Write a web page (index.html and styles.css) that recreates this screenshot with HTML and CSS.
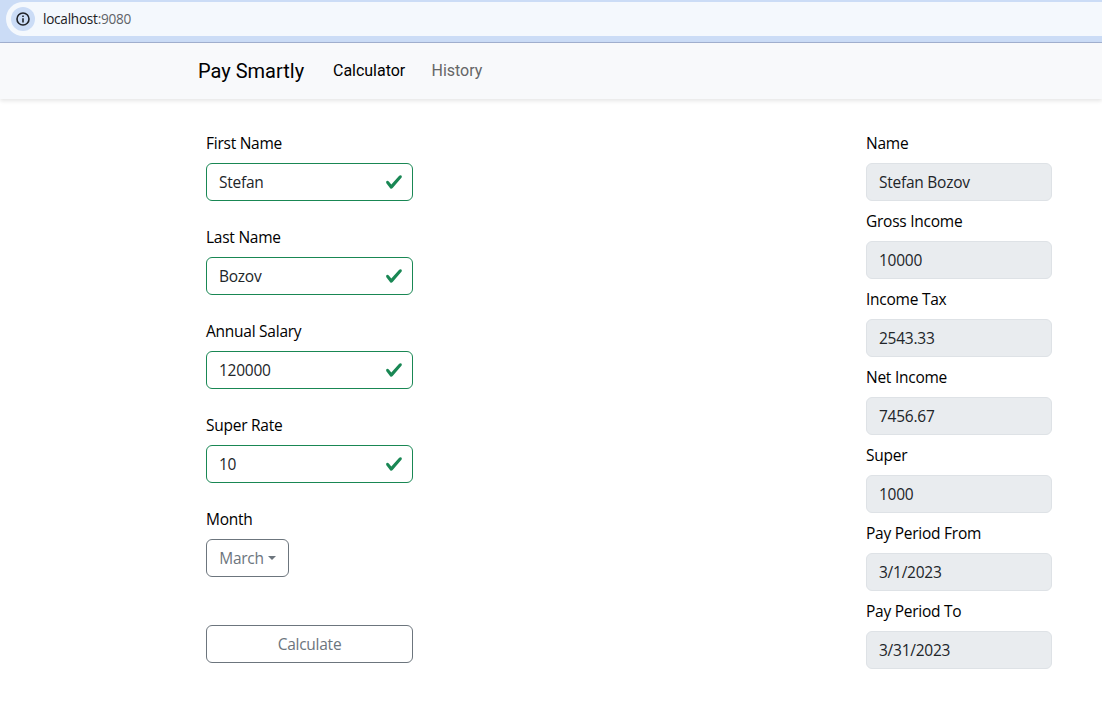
FILE: index.html
```html
<!DOCTYPE html>
<html lang="en">
<head>
<meta charset="utf-8">
<title>Pay Smartly</title>
<link rel="stylesheet" href="styles.css">
</head>
<body>
<div class="browser-bar">
  <div class="address">
    <span class="site-info">
      <svg width="14" height="14" viewBox="0 0 14 14"><circle cx="7" cy="7" r="6" fill="none" stroke="#202329" stroke-width="1.6"/><path d="M6.2 3.5h1.6v1.6H6.2zM6.2 6.2h1.6v4.2H6.2z" fill="#202329"/></svg>
    </span>
    <span class="url"><span class="host">localhost</span>:9080</span>
  </div>
</div>
<nav class="navbar">
  <a class="brand">Pay Smartly</a>
  <a class="nav-link active">Calculator</a>
  <a class="nav-link">History</a>
</nav>
<main class="page">
  <form class="form">
    <div class="field"><label class="label">First Name</label><div class="control valid">Stefan<svg class="check" viewBox="0 0 8 8"><path fill="#198754" d="M2.3 6.73.6 4.53c-.4-1.04.46-1.4 1.1-.8l1.1 1.4 3.4-3.8c.6-.63 1.6-.27 1.2.7l-4 4.6c-.43.5-.8.4-1.1.1z"/></svg></div></div>
    <div class="field"><label class="label">Last Name</label><div class="control valid">Bozov<svg class="check" viewBox="0 0 8 8"><path fill="#198754" d="M2.3 6.73.6 4.53c-.4-1.04.46-1.4 1.1-.8l1.1 1.4 3.4-3.8c.6-.63 1.6-.27 1.2.7l-4 4.6c-.43.5-.8.4-1.1.1z"/></svg></div></div>
    <div class="field"><label class="label">Annual Salary</label><div class="control valid">120000<svg class="check" viewBox="0 0 8 8"><path fill="#198754" d="M2.3 6.73.6 4.53c-.4-1.04.46-1.4 1.1-.8l1.1 1.4 3.4-3.8c.6-.63 1.6-.27 1.2.7l-4 4.6c-.43.5-.8.4-1.1.1z"/></svg></div></div>
    <div class="field"><label class="label">Super Rate</label><div class="control valid">10<svg class="check" viewBox="0 0 8 8"><path fill="#198754" d="M2.3 6.73.6 4.53c-.4-1.04.46-1.4 1.1-.8l1.1 1.4 3.4-3.8c.6-.63 1.6-.27 1.2.7l-4 4.6c-.43.5-.8.4-1.1.1z"/></svg></div></div>
    <div class="field"><label class="label">Month</label><button type="button" class="button month">March<span class="caret"></span></button></div>
    <button type="button" class="button calculate">Calculate</button>
  </form>
  <section class="results">
    <div class="field"><span class="label">Name</span><div class="control readonly">Stefan Bozov</div></div>
    <div class="field"><span class="label">Gross Income</span><div class="control readonly">10000</div></div>
    <div class="field"><span class="label">Income Tax</span><div class="control readonly">2543.33</div></div>
    <div class="field"><span class="label">Net Income</span><div class="control readonly">7456.67</div></div>
    <div class="field"><span class="label">Super</span><div class="control readonly">1000</div></div>
    <div class="field"><span class="label">Pay Period From</span><div class="control readonly">3/1/2023</div></div>
    <div class="field"><span class="label">Pay Period To</span><div class="control readonly">3/31/2023</div></div>
  </section>
</main>
</body>
</html>
```
FILE: styles.css
```css
* { box-sizing: border-box; }
body {
  margin: 0;
  height: 701px;
  overflow: hidden;
  background: #fff;
  color: #000;
  font: 400 15.5px/24px "Open Sans", "Noto Sans", sans-serif;
  letter-spacing: -0.25px;
}
.browser-bar {
  height: 43px;
  padding: 2px 0 0 6px;
  background: #cbdcf6;
  border-bottom: 1px solid #a2b1d0;
}
.address {
  display: flex;
  align-items: center;
  height: 34px;
  padding-left: 5px;
  border-radius: 17px 0 0 17px;
  background: #f4f8fd;
}
.site-info {
  display: flex;
  align-items: center;
  justify-content: center;
  width: 24px;
  height: 24px;
  border-radius: 50%;
  background: #cbdcf6;
}
.url {
  margin-left: 8px;
  font-size: 13.6px;
  color: #5f6368;
}
.host { color: #202124; }
.navbar {
  display: flex;
  align-items: center;
  height: 56px;
  padding-left: 198px;
  background: #f8f9fb;
  box-shadow: 0 2px 4px rgba(0, 0, 0, .1);
  font-family: Roboto, sans-serif;
  letter-spacing: 0;
}
.brand {
  width: 135px;
  font-size: 20px;
}
.nav-link {
  width: 98.5px;
  font-size: 16px;
  letter-spacing: -0.02px;
  color: #656667;
}
.nav-link.active { color: #000; }
.page {
  display: flex;
  justify-content: space-between;
  padding: 32px 50px 0 206px;
}
.form {
  display: flex;
  flex-direction: column;
  gap: 24px;
  width: 207px;
}
.results {
  display: flex;
  flex-direction: column;
  gap: 8px;
  width: 186px;
}
.field {
  display: flex;
  flex-direction: column;
  align-items: flex-start;
  gap: 8px;
}
.control {
  display: flex;
  align-items: center;
  justify-content: space-between;
  width: 100%;
  height: 38px;
  padding: 0 9px 0 12px;
  border: 1px solid #dee2e6;
  border-radius: 6px;
  color: #212529;
}
.valid { border-color: #198754; }
.readonly { background: #e9ecef; }
.check {
  width: 18px;
  height: 18px;
}
.button {
  display: flex;
  align-items: center;
  justify-content: center;
  height: 38px;
  padding: 0 12px;
  border: 1px solid #6c757d;
  border-radius: 6px;
  background: #fff;
  color: #6c757d;
  font: inherit;
  letter-spacing: inherit;
}
.month { width: 83px; }
.caret {
  margin-left: 4px;
  border-top: 4.8px solid #6c757d;
  border-left: 4.8px solid transparent;
  border-right: 4.8px solid transparent;
}
.calculate { margin-top: 24px; }
```
